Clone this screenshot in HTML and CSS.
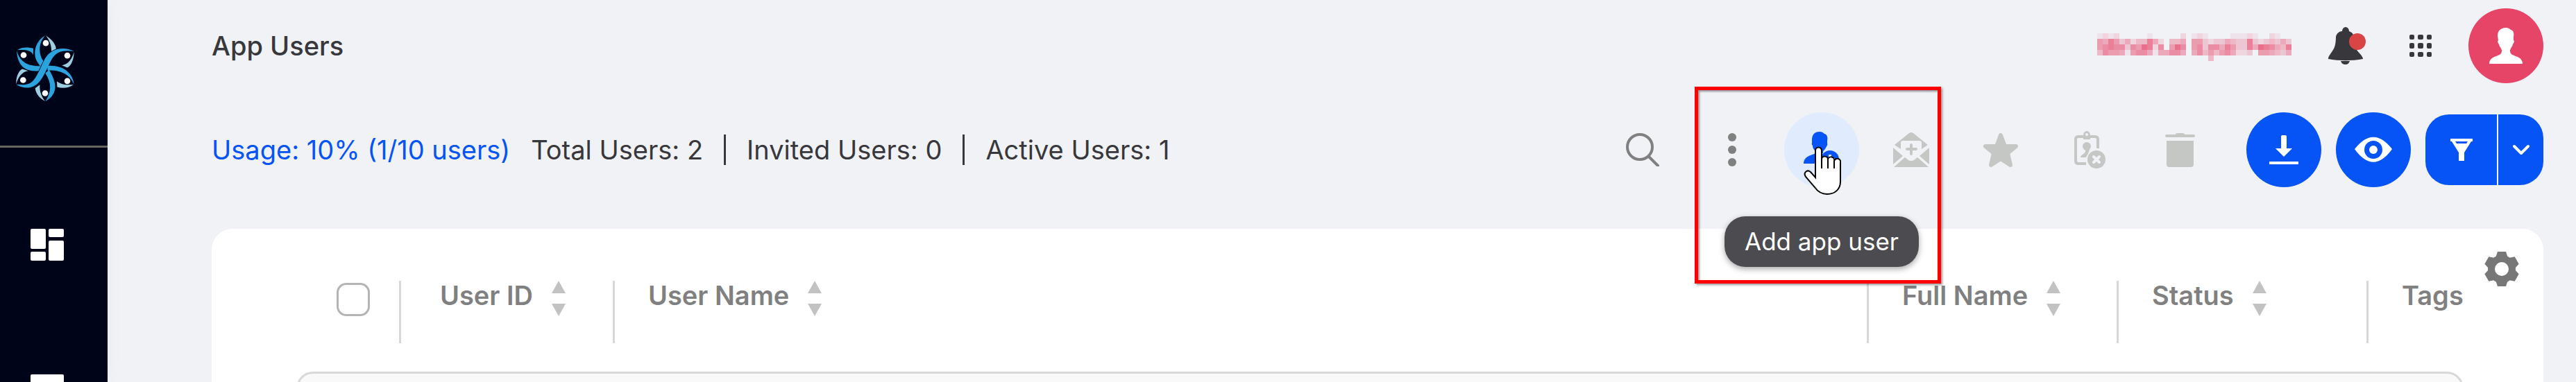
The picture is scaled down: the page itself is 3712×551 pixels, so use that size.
FILE: index.html
```html
<!DOCTYPE html>
<html lang="en">
<head>
<meta charset="utf-8">
<title>App Users</title>
<link rel="stylesheet" href="styles.css">
</head>
<body>
<div class="app">
  <nav class="sidebar" aria-label="Main">
    <a class="brand" href="#" aria-label="Home">
      <svg width="90" height="102" viewBox="60 55 270 305">
        <g fill="#9ccfe0">
          <path d="M198 64C225 80 243 105 242 122C236 127 230 133 222 138C224 110 215 85 198 64Z"/>
          <path d="M320 135C320 170 305 200 290 203L268 193C295 190 312 165 320 135Z"/>
          <path d="M246 262C265 278 295 278 318 277C295 293 270 293 247 287Z"/>
          <path d="M152 292L172 277C170 305 180 330 195 348C170 335 155 315 152 292Z"/>
          <path d="M70 274C68 240 85 212 97 209L122 217C95 220 78 245 70 274Z"/>
        </g>
        <g fill="#2ba3df">
          <path d="M75 127C95 112 125 115 144 120V148C135 128 110 125 75 127Z"/>
          <path d="M72 130C75 178 95 224 168 217L180 196C120 198 88 180 72 130Z"/>
          <path d="M196 64C155 85 138 140 162 180L174 198L190 178C165 145 165 95 196 64Z"/>
          <path d="M320 132C280 112 225 115 196 162C181 188 165 235 145 258C125 282 95 278 70 276C95 292 135 300 165 270C190 245 205 200 222 170C245 128 280 128 320 132Z" stroke="#000419" stroke-width="5" paint-order="stroke"/>
          <path d="M205 195C270 190 315 225 320 275C303 237 270 212 205 215Z"/>
          <path d="M212 212C226 235 242 270 238 295C232 325 215 338 196 349C222 310 225 270 196 228Z"/>
        </g>
        <g fill="#fff">
          <circle cx="198" cy="97" r="13"/><circle cx="102" cy="149" r="13"/><circle cx="291" cy="151" r="13"/>
          <circle cx="100" cy="257" r="13"/><circle cx="291" cy="261" r="13"/><circle cx="195" cy="314" r="13"/>
        </g>
      </svg>
    </a>
    <a class="nav-item" href="#" aria-label="Dashboard">
      <svg width="48" height="46" viewBox="0 0 48 46" fill="#fff"><rect width="22" height="29" rx="2"/><rect x="26" width="22" height="12" rx="2"/><rect y="33" width="22" height="13" rx="2"/><rect x="26" y="17" width="22" height="29" rx="2"/></svg>
    </a>
    <a class="nav-item" href="#" aria-label="Modules">
      <svg width="48" height="46" viewBox="0 0 48 46" fill="#fff"><rect width="48" height="46" rx="2"/></svg>
    </a>
  </nav>

  <main class="main">
    <header class="topbar">
      <h1 class="title">App Users</h1>
      <div class="account">
        <svg class="name-mask" id="name-mask" width="280" height="40" viewBox="0 0 280 40" shape-rendering="crispEdges" role="img" aria-label="Hidden name"></svg>
        <button class="plain bell" aria-label="Notifications">
          <svg width="64" height="54" viewBox="0 0 64 54" fill="#38373c"><path d="M20 6A5 6 0 0 1 30 6C36 8 38 13 38 20C38 32 42 34 47 40C49 43 50 44 50 46C35 49 15 49 0 46C0 43 1 42 3 39C8 32 11 28 11 14C12 9 16 6 20 6Z"/><path d="M18 49H31C30 52 28 54 25 54C21 54 19 52 18 49Z"/><circle cx="42" cy="21" r="12" fill="#d94444"/></svg>
        </button>
        <button class="plain" aria-label="Apps">
          <svg width="32" height="32" viewBox="0 0 32 32" fill="#38373c"><rect width="7" height="7" rx="2"/><rect x="12" width="8" height="7" rx="2"/><rect x="25" width="7" height="7" rx="2"/><rect y="12" width="7" height="8" rx="2"/><rect x="12" y="12" width="8" height="8" rx="2"/><rect x="25" y="12" width="7" height="8" rx="2"/><rect y="25" width="7" height="7" rx="2"/><rect x="12" y="25" width="8" height="7" rx="2"/><rect x="25" y="25" width="7" height="7" rx="2"/></svg>
        </button>
        <button class="round avatar" aria-label="Profile">
          <svg width="48" height="52" viewBox="0 0 48 52" fill="#fff"><path d="M12 12C12 4 17 0 24 0C27 0 29 1 31 3C35 4 36 8 35 13V18C37 20 35 22 34 24C33 28 30 30 30 33C30 38 33 39 38 41C44 43 48 46 48 52H0C0 46 4 43 10 41C15 39 18 38 18 33C18 30 15 28 14 24C13 22 11 20 13 18Z"/></svg>
        </button>
      </div>
    </header>

    <section class="toolbar">
      <div class="stats">
        <a class="usage" href="#">Usage: 10% (1/10 users)</a>
        <span>Total Users: 2</span><i class="bar"></i>
        <span>Invited Users: 0</span><i class="bar"></i>
        <span>Active Users: 1</span>
      </div>
      <div class="tools">
        <button class="round" aria-label="Search">
          <svg width="48" height="48" viewBox="0 0 48 48" fill="none" stroke="#808080"><circle cx="20" cy="20" r="18" stroke-width="4"/><path d="M33 34L46 47" stroke-width="4" stroke-linecap="round"/></svg>
        </button>
        <div class="marked">
          <button class="round" aria-label="More">
            <svg width="12" height="48" viewBox="0 0 12 48" fill="#808080"><circle cx="6" cy="6" r="6"/><circle cx="6" cy="24" r="6"/><circle cx="6" cy="42" r="6"/></svg>
          </button>
          <div class="hovered">
            <button class="round hover" aria-label="Add app user">
              <svg width="52" height="52" viewBox="0 0 52 52"><g fill="#0654f5"><path d="M12 12C12 4 16 0 23 0C26 0 28 1 30 3C34 4 35 8 34 13V17C35 19 33 21 32 23C31 26 28 27 28 30C26 34 25 40 24 46H0C0 40 4 36 10 34C15 32 18 32 17 28C14 25 13 23 13 20C11 18 12 17 12 16Z"/><circle cx="38" cy="40" r="13"/></g><path d="M38 33V47M31 40H45" stroke="#e0ebfe" stroke-width="4"/></svg>
            </button>
            <div class="tooltip" role="tooltip">Add app user</div>
            <svg class="cursor" width="54" height="72" viewBox="-1 -1 54 72" fill="#fff" stroke="#000" stroke-width="2"><path d="M16 44V5A4 4 0 0 1 25 5V18A4 4 0 0 1 34 18A4 4 0 0 1 43 20A4 4 0 0 1 52 23V50C52 61 44 68 33 68C24 68 19 64 15 58L2 43C-2 37 4 32 9 36Z"/><path d="M25 17V31M34 18V31M43 20V31"/></svg>
          </div>
          <button class="round" disabled aria-label="Invite user">
            <svg width="52" height="50" viewBox="0 0 52 50" fill="#c5c7c4"><path d="M23 1Q26 -1 29 1L50 18L41 24V15Q41 12 38 12H14Q11 12 11 15V24L2 18Z"/><path d="M0 22L14 34L0 46Z"/><path d="M52 22L38 34L52 46Z"/><path d="M1 50L17 36L22 40Q26 42 30 40L35 36L51 50Z"/><path d="M26 18V31M20 24H33" fill="none" stroke="#c5c7c4" stroke-width="4" stroke-linecap="round"/></svg>
          </button>
          <div class="frame"></div>
        </div>
        <button class="round" disabled aria-label="Favourite">
          <svg width="50" height="49" viewBox="0 0 50 49" fill="#c5c7c4" stroke="#c5c7c4" stroke-width="6" stroke-linejoin="round"><path d="M25 3L31 19H47L35 29L39 46L25 37L11 46L15 29L3 19H19Z"/></svg>
        </button>
        <button class="round" disabled aria-label="Revoke user">
          <svg width="50" height="54" viewBox="0 0 50 54" fill="#c5c7c4"><path d="M16 8H8Q4 8 4 12V43Q4 47 8 47H19M24 8H32Q36 8 36 12V25" fill="none" stroke="#c5c7c4" stroke-width="4"/><path fill-rule="evenodd" d="M15 12V6A5 6 0 0 1 25 6V12ZM18 5A2 2 0 0 0 22 5A2 2 0 0 0 18 5Z"/><ellipse cx="20" cy="22" rx="6" ry="6"/><path d="M11 38C11 33 19 34 18 27L24 26C23 32 21 34 19 38Z"/><circle cx="34" cy="41" r="13"/><path d="M30 37L38 45M38 37L30 45" stroke="#f0f2f6" stroke-width="4" stroke-linecap="round"/></svg>
        </button>
        <button class="round" disabled aria-label="Delete">
          <svg width="43" height="49" viewBox="0 0 43 49" fill="#c5c7c4"><path d="M15 2Q15 0 18 0H25Q28 0 28 2H41Q43 2 43 4T41 6H2Q0 6 0 4T2 2Z"/><path d="M2 11H41V45Q41 49 37 49H6Q2 49 2 45Z"/></svg>
        </button>
        <div class="primary-tools">
          <button class="round primary" aria-label="Download">
            <svg width="42" height="42" viewBox="0 0 42 42" fill="#fff"><path d="M17 2Q17 0 19 0H23Q25 0 25 2V19H33L21 31L9 19H17Z"/><rect y="38" width="42" height="4"/></svg>
          </button>
          <button class="round primary" aria-label="View">
            <svg width="54" height="38" viewBox="0 0 54 38"><path d="M0 18C18 -5 36 -5 54 18C36 43 18 43 0 18Z" fill="#fff"/><circle cx="27" cy="19" r="13" fill="#0654f5"/><circle cx="27" cy="19" r="6" fill="#fff"/></svg>
          </button>
          <div class="split">
            <button class="primary split-main" aria-label="Filter">
              <svg width="32" height="32" viewBox="0 0 32 32"><path d="M0 0H32V4H30L20 20V32H12V20L2 4H0Z" fill="#fff"/><path d="M7 4H25L23 7H9Z" fill="#0654f5"/></svg>
            </button>
            <button class="primary split-more" aria-label="Filter options">
              <svg width="26" height="16" viewBox="0 0 26 16" fill="none" stroke="#fff" stroke-width="4" stroke-linecap="round" stroke-linejoin="round"><path d="M3 3L13 13L23 3"/></svg>
            </button>
          </div>
        </div>
      </div>
    </section>

    <section class="card">
      <div class="listing">
        <table class="columns">
          <thead><tr>
            <th class="col-check"><input class="check" type="checkbox" aria-label="Select all"></th>
            <th class="col-id"><button class="sort">User ID<svg width="20" height="51" viewBox="0 0 20 51" fill="#c2c2c2"><path d="M10 0L20 18H0ZM0 33H20L10 51Z"/></svg></button></th>
            <th><button class="sort">User Name<svg width="20" height="51" viewBox="0 0 20 51" fill="#c2c2c2"><path d="M10 0L20 18H0ZM0 33H20L10 51Z"/></svg></button></th>
            <th class="col-mid"><button class="sort">Full Name<svg width="20" height="51" viewBox="0 0 20 51" fill="#c2c2c2"><path d="M10 0L20 18H0ZM0 33H20L10 51Z"/></svg></button></th>
            <th class="col-mid"><button class="sort">Status<svg width="20" height="51" viewBox="0 0 20 51" fill="#c2c2c2"><path d="M10 0L20 18H0ZM0 33H20L10 51Z"/></svg></button></th>
            <th class="col-tags">Tags</th>
          </tr></thead>
        </table>
        <div class="rows"></div>
      </div>
      <button class="plain settings" aria-label="Table settings">
        <svg width="50" height="50" viewBox="-25 -25 50 50" fill="#777"><circle r="15" fill="none" stroke="#777" stroke-width="10"/><path d="M-6 -25H6L9 -16H-9Z"/><path d="M-6 -25H6L9 -16H-9Z" transform="rotate(60)"/><path d="M-6 -25H6L9 -16H-9Z" transform="rotate(120)"/><path d="M-6 -25H6L9 -16H-9Z" transform="rotate(180)"/><path d="M-6 -25H6L9 -16H-9Z" transform="rotate(240)"/><path d="M-6 -25H6L9 -16H-9Z" transform="rotate(300)"/></svg>
      </button>
    </section>
  </main>
</div>
<script src="mask.js"></script>
</body>
</html>
```

FILE: mask.js
```js
// Mosaic over the account name: one digit per 8px cell, 0 (clear) to 9 (strong).
const rows = [
  "12120000010000020121000011121002100",
  "65863524485204450663233543383234353",
  "67877376982706970673775863385987548",
  "47665167751557750574646752230665435",
  "00000000000000000000400000000000000"
];
const mask = document.getElementById("name-mask");
rows.forEach((row, y) => {
  [...row].forEach((level, x) => {
    if (level === "0") return;
    const cell = document.createElementNS("http://www.w3.org/2000/svg", "rect");
    cell.setAttribute("x", x * 8);
    cell.setAttribute("y", y * 8);
    cell.setAttribute("width", 8);
    cell.setAttribute("height", 8);
    cell.setAttribute("fill", "#e8708c");
    cell.setAttribute("fill-opacity", level / 9);
    mask.append(cell);
  });
});
```

FILE: styles.css
```css
* { box-sizing: border-box; }
body {
  margin: 0;
  background: #f0f2f6;
  color: #38373c;
  font-family: Inter, "Liberation Sans", sans-serif;
}
button { padding: 0; border: 0; background: none; font: inherit; color: inherit; }
svg { display: block; flex: none; }
.app { display: flex; height: 100vh; overflow: hidden; }

.sidebar {
  display: flex;
  flex-direction: column;
  flex: none;
  width: 155px;
  background: #000419;
  box-shadow: 0 0 24px rgba(0, 0, 0, 0.03);
}
.brand { height: 213px; padding: 48px 20px; border-bottom: 3px solid #66665f; flex: none; }
.nav-item { height: 210px; padding: 117px 44px 0; flex: none; }

.main { flex: 1; min-width: 0; padding: 12px 47px 0 150px; display: flex; flex-direction: column; }
.topbar, .toolbar { display: flex; align-items: center; justify-content: space-between; height: 108px; flex: none; }
.title { margin: 0; font-size: 38px; font-weight: 500; }
.account { display: flex; align-items: center; gap: 53px; }
.plain { display: block; }
.name-mask { margin-top: 4px; }
.round {
  display: flex;
  align-items: center;
  justify-content: center;
  flex: none;
  width: 108px;
  height: 108px;
  border-radius: 50%;
}
.avatar { background: #e64568; }

.toolbar { margin-top: 42px; }
.stats { display: flex; align-items: center; gap: 30px; font-size: 38px; white-space: nowrap; }
.usage { color: #0654f5; text-decoration: none; }
.bar { width: 3px; height: 44px; background: #38373c; }
.tools, .marked, .primary-tools { display: flex; align-items: center; gap: 21px; }
.primary-tools { margin-left: 21px; }
.marked, .hovered { position: relative; }
.hover { background: #e0ebfe; }
.primary { background: #0654f5; }
.split { display: flex; gap: 2px; height: 102px; }
.split-main, .split-more { display: flex; align-items: center; justify-content: center; }
.split-main { width: 103px; border-radius: 34px 0 0 34px; }
.split-more { width: 65px; border-radius: 0 34px 34px 0; }

.tooltip {
  position: absolute;
  top: 150px;
  left: 50%;
  transform: translateX(-50%);
  padding: 0 29px;
  border-radius: 30px;
  background: rgba(66, 65, 70, 0.95);
  box-shadow: 0 3px 8px rgba(0, 0, 0, 0.35);
  color: #fff;
  font-size: 35px;
  line-height: 73px;
  white-space: nowrap;
}
.cursor { position: absolute; top: 49px; left: 28px; }
.frame {
  position: absolute;
  top: -37px;
  left: 0;
  width: 355px;
  height: 284px;
  border: 5px solid #f00;
  box-shadow: 2px 2px 3px rgba(0, 0, 0, 0.4), inset 2px 2px 3px rgba(0, 0, 0, 0.4);
  pointer-events: none;
}

.card {
  display: flex;
  flex: 1;
  min-height: 0;
  margin-top: 60px;
  padding-left: 122px;
  border-radius: 30px 30px 0 0;
  background: #fff;
}
.listing { flex: 1; padding-top: 75px; }
.columns { width: 100%; table-layout: fixed; border-collapse: separate; border-spacing: 0; }
th {
  height: 90px;
  padding: 0 0 0 48px;
  border-left: 3px solid #d8d8d8;
  color: #808080;
  font-size: 38px;
  font-weight: 600;
  line-height: 43px;
  text-align: left;
  vertical-align: top;
  white-space: nowrap;
}
.col-check { width: 148px; padding: 3px 0 0 58px; border: 0; }
.col-id { width: 308px; padding-left: 56px; }
.col-mid { width: 360px; }
.col-tags { width: 140px; }
.check {
  display: block;
  appearance: none;
  width: 48px;
  height: 48px;
  margin: 0;
  border: 3px solid #b4b4b4;
  border-radius: 14px;
  background: #fff;
}
.sort { display: flex; align-items: flex-start; gap: 27px; }
.rows { height: 120px; margin-top: 41px; border: 3px solid #d8d8d8; border-radius: 24px; background: #f9f9f9; }
.settings { width: 115px; padding: 33px 35px 0 30px; align-self: flex-start; }
```
